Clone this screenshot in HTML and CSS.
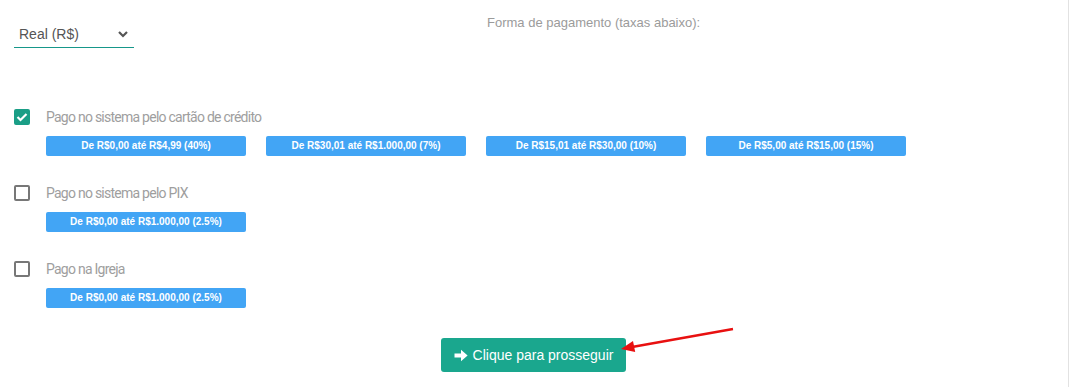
FILE: index.html
```html
<!DOCTYPE html>
<html lang="pt-BR">
<head>
    <meta charset="UTF-8">
    <title>Forma de pagamento</title>
    <link rel="stylesheet" href="styles.css">
</head>
<body>
    <div class="card">
        <div class="top-row">
            <div class="moeda">
                <span>Real (R$)</span>
                <svg class="chevron" width="10" height="7" viewBox="0 0 10 7"><path d="M1 1 L5 5 L9 1" fill="none" stroke="#555" stroke-width="2.2"/></svg>
            </div>
            <div class="forma-titulo">Forma de pagamento (taxas abaixo):</div>
        </div>

        <div class="grupo">
            <label class="opcao">
                <span class="check checked">
                    <svg width="12" height="10" viewBox="0 0 12 10"><path d="M1.5 5 L4.5 8 L10.5 2" fill="none" stroke="#fff" stroke-width="2.2"/></svg>
                </span>
                Pago no sistema pelo cartão de crédito
            </label>
            <div class="taxas">
                <span class="taxa">De R$0,00 até R$4,99 (40%)</span>
                <span class="taxa">De R$30,01 até R$1.000,00 (7%)</span>
                <span class="taxa">De R$15,01 até R$30,00 (10%)</span>
                <span class="taxa">De R$5,00 até R$15,00 (15%)</span>
            </div>
        </div>

        <div class="grupo">
            <label class="opcao">
                <span class="check"></span>
                Pago no sistema pelo PIX
            </label>
            <div class="taxas">
                <span class="taxa">De R$0,00 até R$1.000,00 (2.5%)</span>
            </div>
        </div>

        <div class="grupo">
            <label class="opcao">
                <span class="check"></span>
                Pago na Igreja
            </label>
            <div class="taxas">
                <span class="taxa">De R$0,00 até R$1.000,00 (2.5%)</span>
            </div>
        </div>

        <div class="acao">
            <button class="prosseguir">
                <svg width="14" height="13" viewBox="0 0 14 13"><path d="M0.5 4.6 H7 V0.8 L13.6 6.5 L7 12.2 V8.4 H0.5 Z" fill="#fff"/></svg>
                Clique para prosseguir
            </button>
        </div>

        <svg class="seta" width="130" height="30" viewBox="0 0 130 30">
            <line x1="115" y1="3" x2="14" y2="21" stroke="#e81010" stroke-width="2.4"/>
            <path d="M3 23 L15 15 L17.2 26 Z" fill="#e81010"/>
        </svg>
    </div>
</body>
</html>
```
FILE: styles.css
```css
body {
    margin: 0;
    background-color: #fff;
    font-family: "Liberation Sans", Arial, sans-serif;
}
.card {
    position: relative;
    width: 1069px;
    height: 387px;
    border-right: 1px solid #e2e2e2;
    box-sizing: border-box;
    padding: 14px 0 0 14px;
}
.top-row {
    display: flex;
    align-items: flex-start;
}
.moeda {
    width: 120px;
    height: 34px;
    box-sizing: border-box;
    border-bottom: 1px solid #16978a;
    display: flex;
    align-items: center;
    justify-content: space-between;
    padding: 6px 6px 0 5px;
    color: #555;
    font-size: 14px;
}
.chevron {
    margin-top: 1px;
}
.forma-titulo {
    margin-left: 353px;
    margin-top: 1px;
    color: #9b9b9b;
    font-size: 13px;
}
.grupo {
    margin-top: 59px;
}
.grupo + .grupo {
    margin-top: 27px;
}
.opcao {
    display: flex;
    align-items: center;
    gap: 16px;
    height: 20px;
    font-family: Roboto, sans-serif;
    font-size: 14px;
    letter-spacing: -0.75px;
    color: #9e9e9e;
}
.check {
    width: 16px;
    height: 16px;
    box-sizing: border-box;
    border: 2px solid #777;
    border-radius: 2px;
    display: flex;
    align-items: center;
    justify-content: center;
}
.check.checked {
    background-color: #1a9e86;
    border-color: #1a9e86;
}
.taxas {
    display: flex;
    gap: 20px;
    margin-top: 9px;
    margin-left: 32px;
}
.taxa {
    width: 200px;
    height: 20px;
    line-height: 20px;
    text-align: center;
    background-color: #42a5f5;
    color: #fff;
    font-size: 10px;
    font-weight: bold;
    border-radius: 2px;
}
.acao {
    display: flex;
    justify-content: center;
    margin-top: 30px;
    padding-right: 15px;
}
.prosseguir {
    width: 185px;
    height: 34px;
    border: none;
    border-radius: 3px;
    background-color: #1aa78e;
    color: #fff;
    font-family: "Liberation Sans", Arial, sans-serif;
    font-size: 14px;
    display: flex;
    align-items: center;
    justify-content: center;
    gap: 5px;
    cursor: pointer;
}
.seta {
    position: absolute;
    left: 618px;
    top: 326px;
}
```
